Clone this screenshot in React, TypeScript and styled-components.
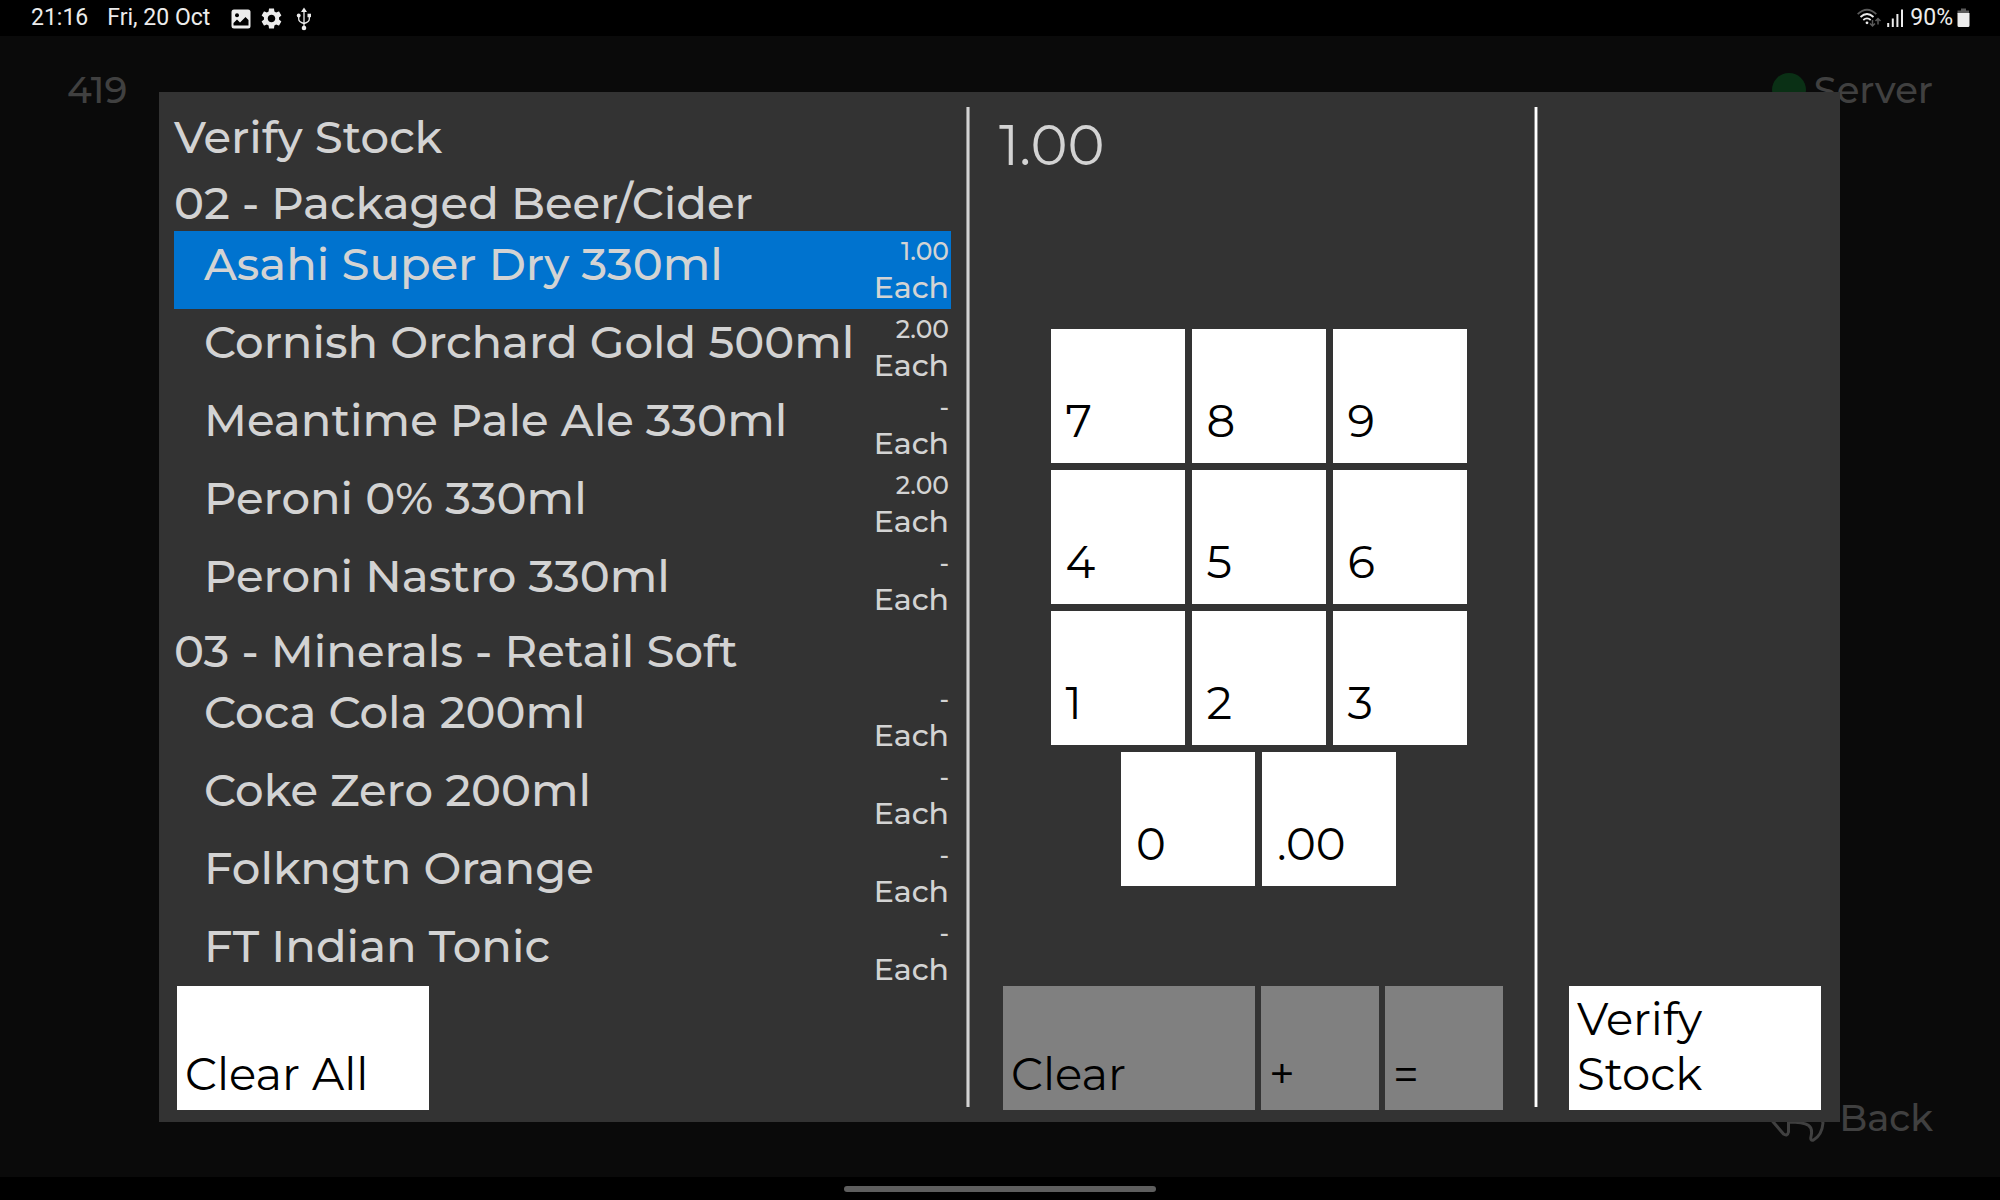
import React, { useState } from "react";
import styled, { createGlobalStyle } from "styled-components";

const GlobalStyle = createGlobalStyle`
  *, *::before, *::after { box-sizing: border-box; }
  body { margin: 0; background: #000; }
  button { font: inherit; border: 0; border-radius: 0; cursor: pointer; }
`;

const Screen = styled.div`
  display: grid;
  grid-template-rows: 36px minmax(0, 1fr) 23px;
  height: 100vh;
  background: #000;
  color: #d3d3d3;
  font-family: Montserrat, Inter, "Open Sans", sans-serif;
  overflow: hidden;
`;

const StatusBar = styled.header`
  display: flex;
  justify-content: space-between;
  align-items: center;
  padding: 0 30px 0 31px;
  color: #ececec;
  font: 400 23px/36px Roboto, sans-serif;
`;

const StatusGroup = styled.div<{ $gap: number }>`
  display: flex;
  align-items: center;
  gap: ${(p) => p.$gap}px;
`;

const StatusIcons = styled(StatusGroup)`
  padding: 1px 0 0 2px;
`;

const Stage = styled.main`
  display: grid;
  grid-template: minmax(0, 1fr) / minmax(0, 1fr);
  background: #0a0a0a;
`;

const Backdrop = styled.div`
  grid-area: 1 / 1;
  display: flex;
  flex-direction: column;
  justify-content: space-between;
  padding: 30px 67px 35px;
  color: #404040;
  font-size: 37px;
  line-height: 48px;
  font-weight: 500;
`;

const BackdropRow = styled.div<{ $end?: boolean }>`
  display: flex;
  align-items: center;
  justify-content: ${(p) => (p.$end ? "flex-end" : "space-between")};
`;

const ServerState = styled.div`
  display: flex;
  align-items: center;
  gap: 8px;
`;

const Dot = styled.span`
  width: 34px;
  height: 34px;
  border-radius: 50%;
  background: #0a3015;
`;

const BackButton = styled.button`
  display: flex;
  align-items: center;
  gap: 14px;
  padding: 0;
  background: none;
  color: inherit;
`;

const Dialog = styled.section`
  grid-area: 1 / 1;
  z-index: 1;
  display: grid;
  grid-template-columns: 792fr 4px 564fr 4px 287fr;
  grid-template-rows: minmax(0, 1fr);
  margin: 56px 160px 55px 159px;
  padding: 15px 15px 12px;
  background: #333;
`;

const Rule = styled.div<{ $color: string }>`
  margin-bottom: 3px;
  border: solid #8c8c8c;
  border-width: 0 1px;
  background: ${(p) => p.$color};
`;

const StockPane = styled.div`
  display: flex;
  flex-direction: column;
  padding-right: 15px;
`;

const Title = styled.h1`
  margin: 0 0 8px;
  padding-top: 2px;
  font-size: 45px;
  line-height: 56px;
  font-weight: 500;
`;

const Groups = styled.div`
  flex: 1;
  min-height: 0;
  margin-bottom: -5px;
  overflow-y: auto;
  scrollbar-width: none;
  font-weight: 500;
`;

const GroupName = styled.h2`
  margin: 0;
  padding-top: 2px;
  font-size: 45px;
  line-height: 56px;
  font-weight: 500;
`;

const Items = styled.ul`
  margin: 0;
  padding: 0;
  list-style: none;
`;

const ItemRow = styled.button<{ $selected: boolean }>`
  display: flex;
  justify-content: space-between;
  align-items: flex-start;
  width: 100%;
  height: 78px;
  padding: 0 2px 0 30px;
  background: ${(p) => (p.$selected ? "#0073cf" : "transparent")};
  color: #d3d3d3;
  text-align: left;
`;

const ItemName = styled.span`
  font-size: 45px;
  line-height: 65px;
  white-space: nowrap;
`;

const ItemCount = styled.span`
  display: flex;
  flex-direction: column;
  text-align: right;
`;

const Quantity = styled.span`
  font-size: 25px;
  line-height: 40px;
`;

const Unit = styled.span`
  font-size: 30px;
  line-height: 33px;
`;

const EntryPane = styled.div`
  display: flex;
  flex-direction: column;
  padding: 0 20px 0 33px;
`;

const Entry = styled.output`
  margin-left: -4px;
  font-size: 56px;
  line-height: 76px;
  font-weight: 400;
`;

const Keypad = styled.div`
  flex: 1;
  display: flex;
  flex-direction: column;
  justify-content: flex-end;
  gap: 7px;
  padding-bottom: 100px;
`;

const KeyRow = styled.div`
  display: flex;
  justify-content: center;
  gap: 7px;
`;

const Key = styled.button`
  display: flex;
  align-items: flex-end;
  width: 134px;
  height: 134px;
  padding: 0 15px 15px;
  background: #fff;
  color: #000;
  font-size: 45px;
  line-height: 55px;
  font-weight: 400;
`;

const Actions = styled.div<{ $inset?: number }>`
  display: flex;
  gap: 6px;
  padding-left: ${(p) => p.$inset ?? 0}px;
`;

const ActionButton = styled.button<{ $narrow?: boolean }>`
  display: flex;
  align-items: flex-end;
  width: ${(p) => (p.$narrow ? 118 : 252)}px;
  height: 124px;
  padding: 0 8px 9px;
  background: #fff;
  color: #000;
  font-size: 45px;
  line-height: 55px;
  font-weight: 400;
  text-align: left;

  &:disabled {
    background: #808080;
    cursor: default;
  }
`;

const ConfirmPane = styled.div`
  display: flex;
  flex-direction: column;
  justify-content: flex-end;
  align-items: flex-end;
  padding-right: 4px;
`;

const NavBar = styled.footer`
  display: flex;
  justify-content: center;
  align-items: center;
  padding-top: 1px;
`;

const NavHandle = styled.div`
  width: 312px;
  height: 6px;
  border-radius: 3px;
  background: #5e5e5e;
`;

type Item = { name: string; qty: string };
const groups: { name: string; items: Item[] }[] = [
  {
    name: "02 - Packaged Beer/Cider",
    items: [
      { name: "Asahi Super Dry 330ml", qty: "1.00" },
      { name: "Cornish Orchard Gold 500ml", qty: "2.00" },
      { name: "Meantime Pale Ale 330ml", qty: "-" },
      { name: "Peroni 0% 330ml", qty: "2.00" },
      { name: "Peroni Nastro 330ml", qty: "-" },
    ],
  },
  {
    name: "03 - Minerals - Retail Soft",
    items: [
      { name: "Coca Cola 200ml", qty: "-" },
      { name: "Coke Zero 200ml", qty: "-" },
      { name: "Folkngtn Orange", qty: "-" },
      { name: "FT Indian Tonic", qty: "-" },
    ],
  },
];

const keyRows = [["7", "8", "9"], ["4", "5", "6"], ["1", "2", "3"], ["0", ".00"]];

const PictureIcon = () => (
  <svg width="20" height="20" viewBox="0 0 20 20" aria-hidden="true">
    <rect x="0.5" y="0.5" width="19" height="19" rx="2.5" fill="#ececec" />
    <circle cx="6" cy="6.300" r="2" fill="#000" />
    <path d="M2.500 16.500v-2.500l3.500-3.500 3 3 5.500-5.500 3 3v5.500z" fill="#000" />
  </svg>
);

const GearIcon = () => (
  <svg width="21" height="21" viewBox="2 2 20 20" aria-hidden="true">
    <path
      fill="#ececec"
      d="M19.14 12.94c.04-.3.06-.61.06-.94 0-.32-.02-.64-.07-.94l2.030-1.580c.18-.14.23-.41.12-.61l-1.920-3.320c-.12-.22-.37-.29-.59-.22l-2.390.96c-.5-.38-1.030-.7-1.620-.94l-.36-2.540c-.04-.24-.24-.41-.48-.41h-3.840c-.24 0-.43.17-.47.41l-.36 2.540c-.59.24-1.130.57-1.620.94l-2.390-.96c-.22-.08-.47 0-.59.22L2.740 8.870c-.12.21-.08.47.12.61l2.030 1.580c-.05.3-.09.63-.09.94s.02.64.07.94l-2.030 1.580c-.18.14-.23.41-.12.61l1.920 3.320c.12.22.37.29.59.22l2.390-.96c.5.38 1.030.7 1.620.94l.36 2.540c.05.24.24.41.48.41h3.840c.24 0 .44-.17.47-.41l.36-2.540c.59-.24 1.130-.56 1.620-.94l2.390.96c.22.08.47 0 .59-.22l1.920-3.320c.12-.22.07-.47-.12-.61l-2.010-1.580zM12 15.600c-1.980 0-3.600-1.620-3.600-3.600s1.620-3.600 3.600-3.600 3.600 1.620 3.600 3.600-1.620 3.600-3.600 3.600z"
    />
  </svg>
);

const UsbIcon = () => (
  <svg width="24" height="24" viewBox="-4 0 24 24" aria-hidden="true">
    <g fill="none" stroke="#ececec" strokeWidth="1.300">
      <path d="M8 4v17M2.700 9v3q0 3 5.300 4.500M13.300 9v3q0 3-5.300 4.500" />
    </g>
    <g fill="#ececec">
      <path d="M8 0.500l3 4.500H5z" />
      <circle cx="2.700" cy="8.500" r="1.900" />
      <rect x="11.500" y="6.700" width="3.500" height="3.500" />
      <circle cx="8" cy="21" r="2.300" />
    </g>
  </svg>
);

const WifiIcon = () => (
  <svg width="24" height="20" viewBox="0 0 24 20" aria-hidden="true">
    <g fill="none" strokeWidth="1.800">
      <path d="M0.700 6.200q9.300-9 18.600 0" stroke="#5a5a5a" />
      <path d="M3.500 9q6.500-6 13 0M6.300 12q3.700-3.200 7.400 0" stroke="#ececec" />
      <path d="M15.500 12v6M13 15.500l2.500 2.500 2.500-2.500M21 16.500v-6M18.500 13l2.500-2.500 2.500 2.500" stroke="#5a5a5a" strokeWidth="1.500" />
    </g>
    <circle cx="10" cy="14.800" r="1.400" fill="#ececec" />
  </svg>
);

const SignalIcon = () => (
  <svg width="17" height="18" viewBox="0 0 17 18" aria-hidden="true">
    <path d="M1.200 14v4M5.800 9.500V18M10.400 5v13M15 0.500V18" stroke="#ececec" strokeWidth="2" />
  </svg>
);

const BatteryIcon = () => (
  <svg width="13" height="20" viewBox="0 0 13 20" aria-hidden="true">
    <path d="M4 0.500h5v2h3V6H0.500V2.500H4z" fill="#5a5a5a" />
    <path d="M0.500 5h12v12.500a1.500 1.500 0 0 1-1.500 1.500H2a1.500 1.500 0 0 1-1.500-1.500z" fill="#ececec" />
  </svg>
);

const ReplyIcon = () => (
  <svg width="56" height="48" viewBox="0 0 56 48" aria-hidden="true">
    <path
      d="M2.500 21.500 15 8.500q3.500-2.500 4.500 2v7.500C38 18 53 18 54 29q-1 12-9.500 17-3.500 1-2.500-3.500C44.500 32 40 28 19.500 28v10q-1 4.500-5 2L2.500 26q-2-2 0-4.500z"
      fill="none"
      stroke="#404040"
      strokeWidth="3"
      strokeLinejoin="round"
    />
  </svg>
);

export default function App() {
  const [selected, setSelected] = useState("Asahi Super Dry 330ml");

  return (
    <>
      <GlobalStyle />
      <Screen>
        <StatusBar>
          <StatusGroup $gap={19}>
            <span>21:16</span>
            <span>Fri, 20 Oct</span>
            <StatusIcons $gap={10}>
              <PictureIcon />
              <GearIcon />
              <UsbIcon />
            </StatusIcons>
          </StatusGroup>
          <StatusGroup $gap={6}>
            <WifiIcon />
            <SignalIcon />
            <StatusGroup $gap={4}>
              <span>90%</span>
              <BatteryIcon />
            </StatusGroup>
          </StatusGroup>
        </StatusBar>

        <Stage>
          <Backdrop>
            <BackdropRow>
              <span>419</span>
              <ServerState>
                <Dot />
                Server
              </ServerState>
            </BackdropRow>
            <BackdropRow $end>
              <BackButton type="button">
                <ReplyIcon />
                Back
              </BackButton>
            </BackdropRow>
          </Backdrop>

          <Dialog role="dialog" aria-labelledby="dialog-title">
            <StockPane>
              <Title id="dialog-title">Verify Stock</Title>
              <Groups>
                {groups.map((group) => (
                  <section key={group.name}>
                    <GroupName>{group.name}</GroupName>
                    <Items>
                      {group.items.map((item) => (
                        <li key={item.name}>
                          <ItemRow
                            type="button"
                            $selected={item.name === selected}
                            aria-pressed={item.name === selected}
                            onClick={() => setSelected(item.name)}
                          >
                            <ItemName>{item.name}</ItemName>
                            <ItemCount>
                              <Quantity>{item.qty}</Quantity>
                              <Unit>Each</Unit>
                            </ItemCount>
                          </ItemRow>
                        </li>
                      ))}
                    </Items>
                  </section>
                ))}
              </Groups>
              <Actions $inset={3}>
                <ActionButton type="button">Clear All</ActionButton>
              </Actions>
            </StockPane>

            <Rule $color="#d3d3d3" />

            <EntryPane>
              <Entry>1.00</Entry>
              <Keypad>
                {keyRows.map((row) => (
                  <KeyRow key={row[0]}>
                    {row.map((label) => (
                      <Key key={label} type="button">
                        {label}
                      </Key>
                    ))}
                  </KeyRow>
                ))}
              </Keypad>
              <Actions>
                <ActionButton type="button" disabled>Clear</ActionButton>
                <ActionButton type="button" $narrow disabled>+</ActionButton>
                <ActionButton type="button" $narrow disabled>=</ActionButton>
              </Actions>
            </EntryPane>

            <Rule $color="#fff" />

            <ConfirmPane>
              <ActionButton type="button">
                Verify
                <br />
                Stock
              </ActionButton>
            </ConfirmPane>
          </Dialog>
        </Stage>

        <NavBar>
          <NavHandle />
        </NavBar>
      </Screen>
    </>
  );
}
